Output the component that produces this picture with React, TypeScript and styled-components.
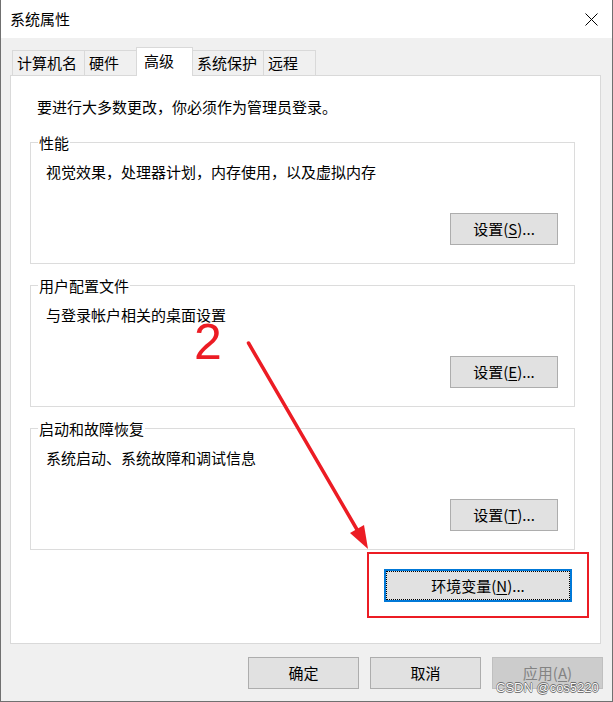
import React from "react";
import styled, { createGlobalStyle } from "styled-components";

const Global = createGlobalStyle`
  html, body { margin: 0; padding: 0; background: #ffffff; }
  body {
    font-family: "Noto Sans CJK SC", "Microsoft YaHei", sans-serif;
    font-size: 15px;
    color: #000;
  }
  * { box-sizing: border-box; }
`;

const Window = styled.div`
  position: relative;
  width: 613px;
  height: 702px;
  display: flex;
  flex-direction: column;
  border: 1px solid #707070;
  border-top: none;
  background: #f0f0f0;
  overflow: hidden;
`;

const TitleBar = styled.div`
  flex: none;
  height: 38px;
  background: #ffffff;
  display: flex;
  align-items: center;
  justify-content: space-between;
  padding: 0 14px 0 9px;
`;

const Title = styled.span`
  font-size: 15px;
  line-height: 20px;
`;

const Body = styled.div`
  flex: 1;
  display: flex;
  flex-direction: column;
  padding: 9px 9px 0 9px;
`;

const TabStrip = styled.div`
  height: 28px;
  display: flex;
  align-items: flex-end;
  padding-left: 3px;
  position: relative;
  z-index: 1;
`;

const Tab = styled.div<{ $w: number; $active?: boolean }>`
  width: ${(p) => p.$w}px;
  height: ${(p) => (p.$active ? 29 : 25)}px;
  margin-left: -1px;
  margin-bottom: ${(p) => (p.$active ? -1 : 0)}px;
  border: 1px solid #d9d9d9;
  border-bottom: none;
  background: ${(p) => (p.$active ? "#ffffff" : "#f0f0f0")};
  position: relative;
  z-index: ${(p) => (p.$active ? 2 : 1)};
  display: flex;
  align-items: center;
  padding-left: ${(p) => (p.$active ? 7 : 4)}px;
  padding-bottom: ${(p) => (p.$active ? 2 : 0)}px;
  font-size: 15px;
  line-height: 20px;
  white-space: nowrap;
`;

const Panel = styled.div`
  height: 569px;
  margin-right: 2px;
  border: 1px solid #d9d9d9;
  background: #ffffff;
  display: flex;
  flex-direction: column;
  padding: 21px 25px 0 19px;
`;

const Intro = styled.div`
  margin-left: 7px;
  line-height: 20px;
  white-space: nowrap;
`;

const Group = styled.fieldset`
  margin: 11px 0 0 0;
  padding: 0;
  border: 1px solid #dcdcdc;
  min-inline-size: 0;
  &:first-of-type {
    margin-top: 15px;
  }
`;

const Legend = styled.legend`
  margin-left: 7px;
  padding: 0 1px;
  line-height: 21px;
  font-size: 15px;
`;

const GroupBody = styled.div`
  display: flex;
  flex-direction: column;
  padding: 10px 16px 18px 15px;
`;

const GroupText = styled.div`
  line-height: 18px;
  margin-bottom: 1px;
  white-space: nowrap;
`;

const Button = styled.button<{ $w: number }>`
  width: ${(p) => p.$w}px;
  height: 32px;
  flex: none;
  background: #e1e1e1;
  border: 1px solid #adadad;
  border-radius: 0;
  font-family: inherit;
  font-size: 15px;
  line-height: 16px;
  color: #000;
  padding: 0;
  display: flex;
  align-items: center;
  justify-content: center;
  white-space: nowrap;
  &:disabled {
    background: #cccccc;
    border-color: #bfbfbf;
    color: #838383;
  }
  u {
    text-decoration-thickness: 1px;
    text-underline-offset: 2px;
  }
`;

const GroupButton = styled(Button)`
  align-self: flex-end;
  margin-top: 31px;
`;

const FocusButton = styled(Button)`
  align-self: flex-end;
  height: 33px;
  margin-top: 19px;
  margin-right: 3px;
  border: 2px solid #0078d7;
  outline: 1px dotted #000;
  outline-offset: -3px;
`;

const Footer = styled.div`
  display: flex;
  justify-content: flex-end;
  gap: 11px;
  margin-top: 13px;
`;

const Overlay = styled.div`
  position: absolute;
  left: -1px;
  top: 0;
  width: 613px;
  height: 702px;
  pointer-events: none;
  z-index: 5;
`;

const Annotation = styled.svg`
  position: absolute;
  left: 0;
  top: 0;
`;

const StepNumber = styled.span`
  position: absolute;
  left: 194px;
  top: 324px;
  font-family: "Liberation Sans", Arial, sans-serif;
  font-size: 50px;
  line-height: 36px;
  color: #ec1c24;
`;

const Watermark = styled.span`
  position: absolute;
  left: 496px;
  top: 681.5px;
  font-family: "Liberation Sans", Arial, sans-serif;
  font-size: 13px;
  line-height: 11px;
  color: #fafafa;
  text-shadow: 0.6px 0 0 rgba(80, 80, 80, 0.75), -0.6px 0 0 rgba(80, 80, 80, 0.75),
    0 0.6px 0 rgba(80, 80, 80, 0.75), 0 -0.6px 0 rgba(80, 80, 80, 0.75);
  white-space: nowrap;
`;

const CloseIcon = () => (
  <svg width="13" height="13" viewBox="0 0 13 13">
    <path d="M0.5 0.5 L12.5 12.5 M12.5 0.5 L0.5 12.5" stroke="#000" strokeWidth="1" fill="none" />
  </svg>
);

const tabs = [
  { label: "计算机名", w: 73 },
  { label: "硬件", w: 53 },
  { label: "高级", w: 57, active: true },
  { label: "系统保护", w: 72 },
  { label: "远程", w: 53 },
];

const groups = [
  { title: "性能", text: "视觉效果，处理器计划，内存使用，以及虚拟内存", key: "S" },
  { title: "用户配置文件", text: "与登录帐户相关的桌面设置", key: "E" },
  { title: "启动和故障恢复", text: "系统启动、系统故障和调试信息", key: "T" },
];

export default function App() {
  return (
    <>
      <Global />
      <Window>
        <TitleBar>
          <Title>系统属性</Title>
          <CloseIcon />
        </TitleBar>
        <Body>
          <TabStrip>
            {tabs.map((t) => (
              <Tab key={t.label} $w={t.w} $active={t.active}>
                {t.label}
              </Tab>
            ))}
          </TabStrip>
          <Panel>
            <Intro>要进行大多数更改，你必须作为管理员登录。</Intro>
            {groups.map((g) => (
              <Group key={g.title}>
                <Legend>{g.title}</Legend>
                <GroupBody>
                  <GroupText>{g.text}</GroupText>
                  <GroupButton $w={108}>
                    设置(<u>{g.key}</u>)...
                  </GroupButton>
                </GroupBody>
              </Group>
            ))}
            <FocusButton $w={188}>
              环境变量(<u>N</u>)...
            </FocusButton>
          </Panel>
          <Footer>
            <Button $w={111}>确定</Button>
            <Button $w={111}>取消</Button>
            <Button $w={111} disabled>
              应用(<u>A</u>)
            </Button>
          </Footer>
        </Body>
        <Overlay>
          <Annotation width="613" height="702" viewBox="0 0 613 702">
            <rect x="368" y="553" width="220" height="64" fill="none" stroke="#ec1c24" strokeWidth="2" />
            <line x1="248.5" y1="343" x2="359" y2="533" stroke="#ec1c24" strokeWidth="3.5" strokeLinecap="round" />
            <polygon points="368,549 350,533 364,525" fill="#ec1c24" />
          </Annotation>
          <StepNumber>2</StepNumber>
          <Watermark>CSDN @cos5220</Watermark>
        </Overlay>
      </Window>
    </>
  );
}
